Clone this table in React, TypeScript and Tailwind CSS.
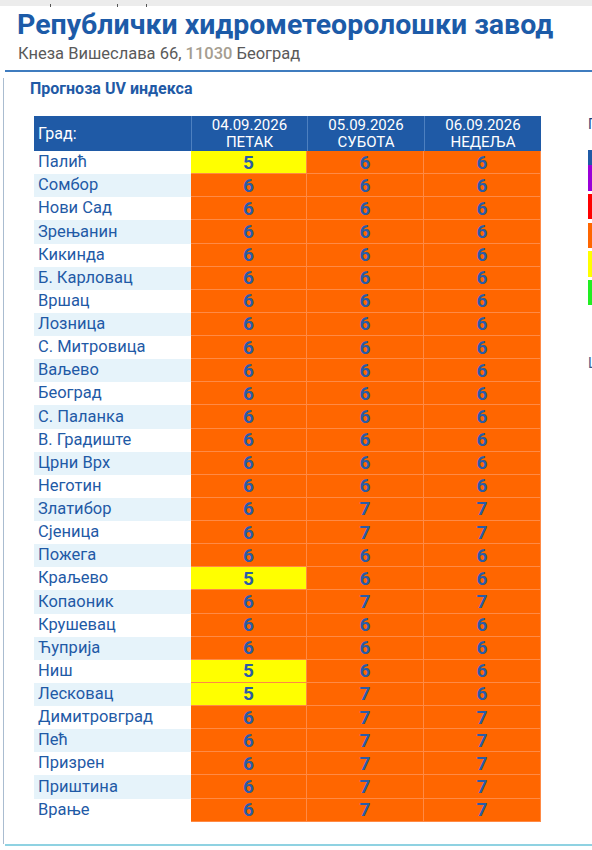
import React from "react";

type Row = [string, number, number, number];

const rows: Row[] = [
  ["Палић", 5, 6, 6],
  ["Сомбор", 6, 6, 6],
  ["Нови Сад", 6, 6, 6],
  ["Зрењанин", 6, 6, 6],
  ["Кикинда", 6, 6, 6],
  ["Б. Карловац", 6, 6, 6],
  ["Вршац", 6, 6, 6],
  ["Лозница", 6, 6, 6],
  ["С. Митровица", 6, 6, 6],
  ["Ваљево", 6, 6, 6],
  ["Београд", 6, 6, 6],
  ["С. Паланка", 6, 6, 6],
  ["В. Градиште", 6, 6, 6],
  ["Црни Врх", 6, 6, 6],
  ["Неготин", 6, 6, 6],
  ["Златибор", 6, 7, 7],
  ["Сјеница", 6, 7, 7],
  ["Пожега", 6, 6, 6],
  ["Краљево", 5, 6, 6],
  ["Копаоник", 6, 7, 7],
  ["Крушевац", 6, 6, 6],
  ["Ћуприја", 6, 6, 6],
  ["Ниш", 5, 6, 6],
  ["Лесковац", 5, 7, 6],
  ["Димитровград", 6, 7, 7],
  ["Пећ", 6, 7, 7],
  ["Призрен", 6, 7, 7],
  ["Приштина", 6, 7, 7],
  ["Врање", 6, 7, 7],
];

const days = [
  ["04.09.2026", "ПЕТАК"],
  ["05.09.2026", "СУБОТА"],
  ["06.09.2026", "НЕДЕЉА"],
];

const UvCell = ({ value }: { value: number }) => (
  <div
    className={`flex items-center justify-center border-r border-b border-[#ff8a45] text-[19px] font-bold leading-none text-[#2a5ca8] ${
      value === 5 ? "bg-[#ffff00]" : "bg-[#ff6600]"
    }`}
  >
    {value}
  </div>
);

export default function App() {
  return (
    <div className="relative h-[850px] w-[592px] overflow-hidden bg-white font-['Roboto',sans-serif]">
      <div className="flex h-[6px] gap-[66px] bg-[#ececec] pl-[50px]">
        <span className="mt-[4px] h-[3px] w-[1px] bg-[#555]" />
        <span className="mt-[4px] h-[3px] w-[1px] bg-[#555]" />
        <span className="mt-[4px] -ml-[38px] h-[3px] w-[1px] bg-[#555]" />
      </div>
      <div className="pl-[17px] pt-[2px] text-[28.5px] font-bold leading-[34px] text-[#1c5ba8]">
        Републички хидрометеоролошки завод
      </div>
      <div className="pl-[18px] pt-[1px] text-[16.5px] leading-[22px] text-[#5a5a5a]">
        Кнеза Вишеслава 66, <span className="font-medium text-[#a59d90]">11030</span> Београд
      </div>
      <div className="ml-[5px] mt-[5px] h-[2px] bg-[#3f7cbf]" />

      <div className="ml-[3px] mt-[6px] h-[766px] border-l border-[#aabcd0]">
        <div className="pl-[26px] pt-[1px] text-[16px] font-bold leading-[20px] text-[#1f5aa6]">
          Прогноза UV индекса
        </div>
        <div className="mt-[17px] flex pl-[30px]">
          <div className="w-[507px]">
            <div className="grid h-[35px] grid-cols-[157px_116px_117px_117px] bg-[#1f5aa6] text-[15px] text-white">
              <div className="flex items-center pl-[4px] text-[16px]">Град:</div>
              {days.map(([date, name]) => (
                <div
                  key={date}
                  className="flex flex-col items-center justify-center border-l border-[#4d80c0] leading-[17px]"
                >
                  <span>{date}</span>
                  <span>{name}</span>
                </div>
              ))}
            </div>
            <div className="grid grid-cols-[157px_116px_117px_117px] auto-rows-[23.14px]">
              {rows.map(([city, a, b, c], i) => (
                <React.Fragment key={city}>
                  <div
                    className={`flex items-center pl-[4px] text-[16.5px] text-[#1f5aa6] ${
                      i % 2 === 1 ? "bg-[#e6f3fa]" : "bg-white"
                    }`}
                  >
                    {city}
                  </div>
                  <UvCell value={a} />
                  <UvCell value={b} />
                  <UvCell value={c} />
                </React.Fragment>
              ))}
            </div>
          </div>
          <div className="ml-[47px] flex flex-col">
            <div className="text-[14px] leading-[16px] text-[#1f3f7a]">П</div>
            <div className="mt-[18px] flex flex-col">
              <div className="h-[15px] w-[6px] bg-[#1f5aa6]" />
              <div className="h-[26px] w-[6px] bg-[#9a00d8]" />
              <div className="mt-[3px] h-[25px] w-[6px] bg-[#ff0000]" />
              <div className="mt-[4px] h-[25px] w-[6px] bg-[#ff6600]" />
              <div className="mt-[3px] h-[26px] w-[6px] bg-[#ffff00]" />
              <div className="mt-[3px] h-[25px] w-[6px] bg-[#22ee22]" />
            </div>
            <div className="mt-[50px] text-[14px] leading-[16px] text-[#3a5a8a]">Ц</div>
          </div>
        </div>
      </div>
      <div className="ml-[5px] h-[2px] bg-[#8fd2e2]" />
    </div>
  );
}
